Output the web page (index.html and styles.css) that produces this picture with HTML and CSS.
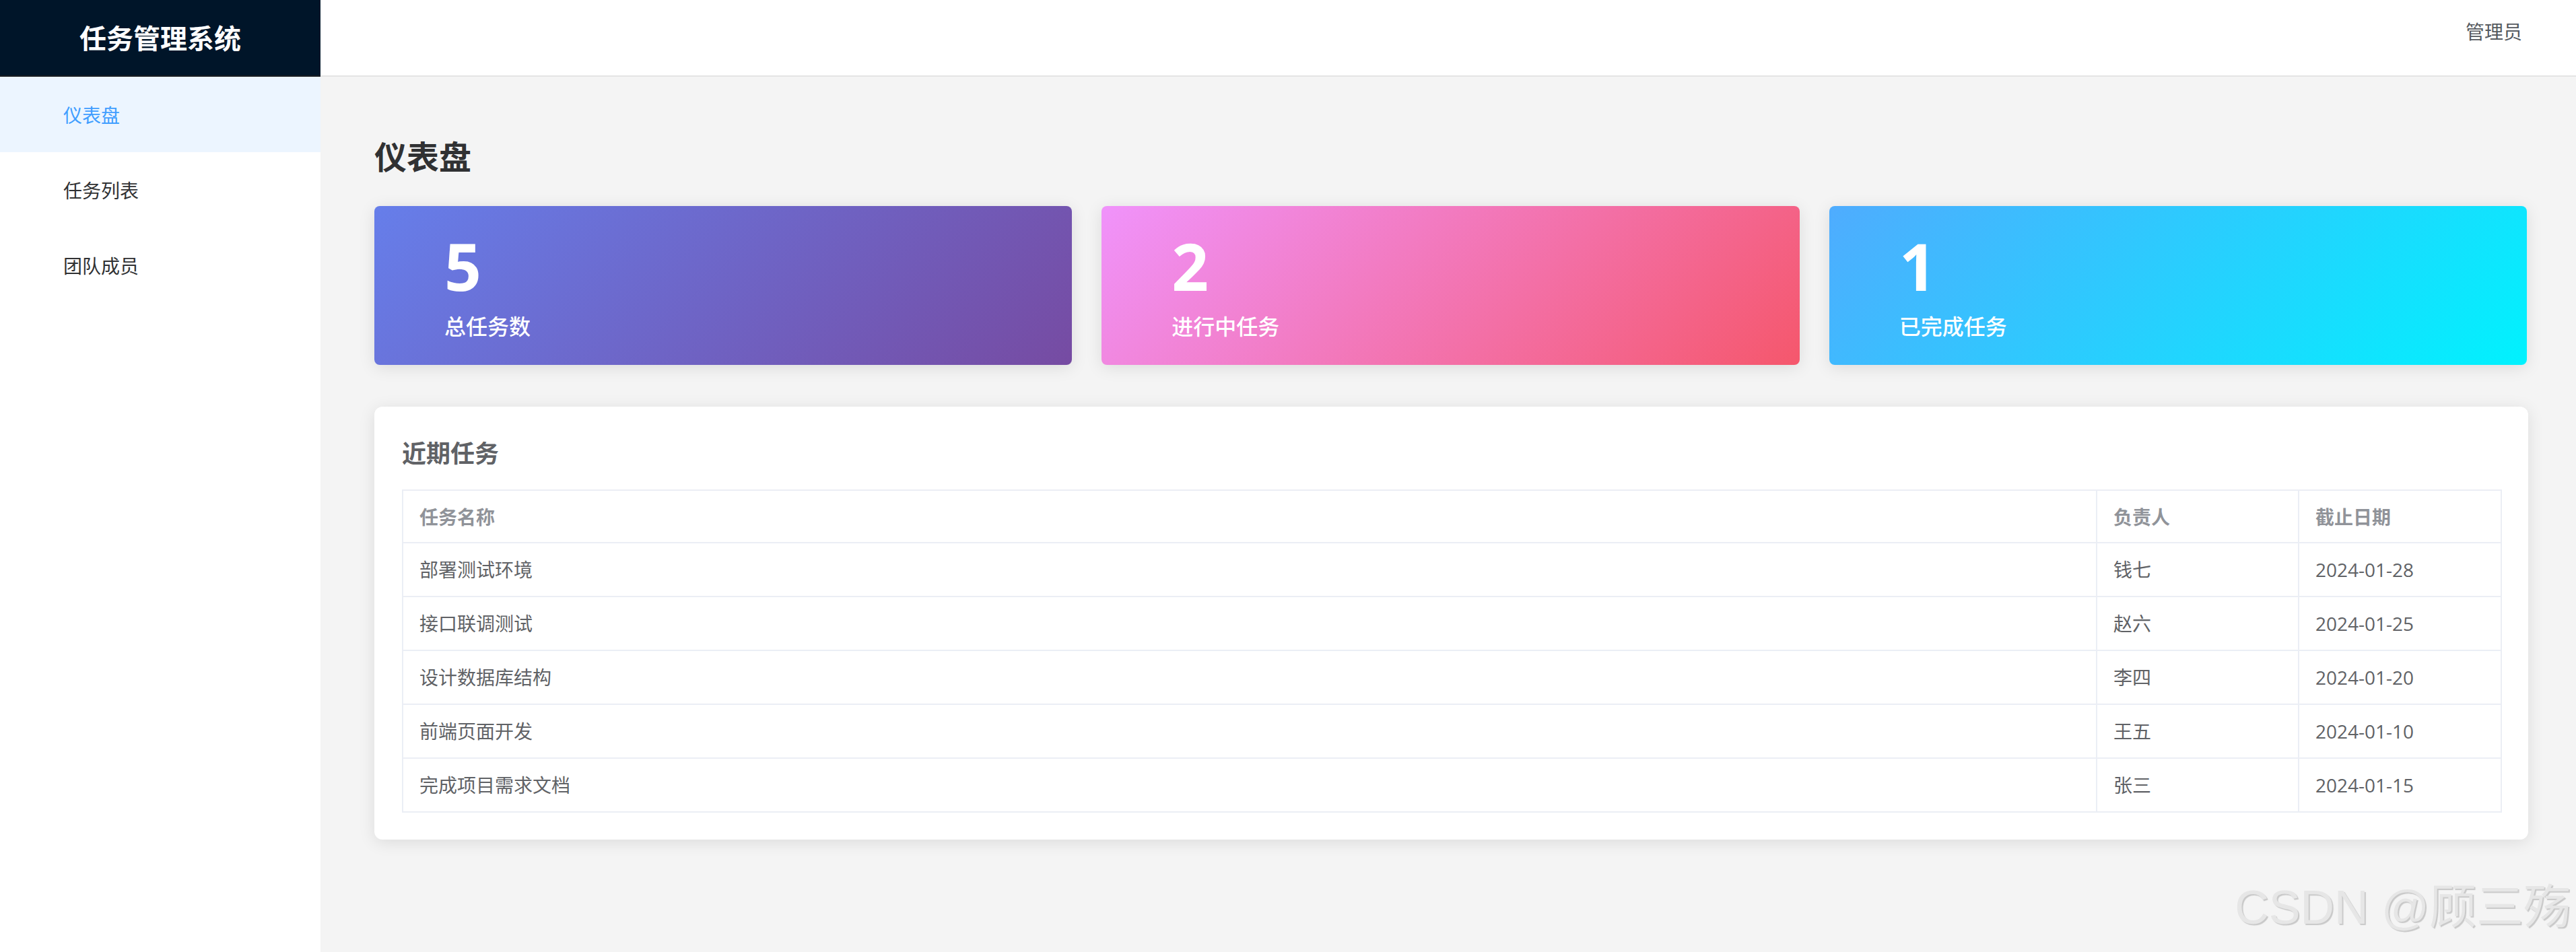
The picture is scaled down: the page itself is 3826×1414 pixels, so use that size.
FILE: index.html
```html
<!DOCTYPE html>
<html lang="zh-CN">
<head>
<meta charset="utf-8">
<title>任务管理系统</title>
<link rel="stylesheet" href="styles.css">
</head>
<body>
<div class="layout">
  <aside class="sidebar">
    <div class="logo">任务管理系统</div>
    <nav class="menu">
      <div class="menu-item active">仪表盘</div>
      <div class="menu-item">任务列表</div>
      <div class="menu-item">团队成员</div>
    </nav>
  </aside>
  <div class="right">
    <header class="topbar">
      <span class="user">管理员</span>
    </header>
    <main class="main">
      <h2 class="page-title">仪表盘</h2>
      <div class="stats">
        <div class="stat stat-total">
          <div class="stat-num">5</div>
          <div class="stat-label">总任务数</div>
        </div>
        <div class="stat stat-doing">
          <div class="stat-num">2</div>
          <div class="stat-label">进行中任务</div>
        </div>
        <div class="stat stat-done">
          <div class="stat-num">1</div>
          <div class="stat-label">已完成任务</div>
        </div>
      </div>
      <section class="panel">
        <h3 class="panel-title">近期任务</h3>
        <table class="tasks">
          <thead>
            <tr><th class="col-name">任务名称</th><th class="col-owner">负责人</th><th class="col-date">截止日期</th></tr>
          </thead>
          <tbody>
            <tr><td>部署测试环境</td><td>钱七</td><td>2024-01-28</td></tr>
            <tr><td>接口联调测试</td><td>赵六</td><td>2024-01-25</td></tr>
            <tr><td>设计数据库结构</td><td>李四</td><td>2024-01-20</td></tr>
            <tr><td>前端页面开发</td><td>王五</td><td>2024-01-10</td></tr>
            <tr><td>完成项目需求文档</td><td>张三</td><td>2024-01-15</td></tr>
          </tbody>
        </table>
      </section>
    </main>
  </div>
</div>
<div class="watermark">CSDN @顾三殇</div>
</body>
</html>
```

FILE: styles.css
```css
* { box-sizing: border-box; }
html, body {
  margin: 0;
  padding: 0;
}
body {
  font-family: "Open Sans", "Noto Sans CJK SC", sans-serif;
  background: #f4f4f4;
  color: #303133;
  width: 3826px;
  height: 1414px;
  overflow: hidden;
  position: relative;
}
.layout {
  display: flex;
  min-height: 1414px;
}
.sidebar {
  width: 476px;
  flex: none;
  background: #ffffff;
  min-height: 1414px;
}
.logo {
  height: 114px;
  background: #001529;
  border-bottom: 2px solid #1b1e22;
  color: #ffffff;
  font-family: "Noto Sans CJK SC", sans-serif;
  font-size: 40px;
  font-weight: 700;
  display: flex;
  align-items: center;
  justify-content: center;
  padding-bottom: 2px;
}
.menu-item {
  height: 112px;
  display: flex;
  align-items: center;
  padding-left: 94px;
  font-family: "Noto Sans CJK SC", sans-serif;
  font-size: 28px;
  color: #303133;
}
.menu-item.active {
  background: #ecf5ff;
  color: #409eff;
}
.right {
  flex: 1;
  display: flex;
  flex-direction: column;
  min-width: 0;
}
.topbar {
  height: 114px;
  background: #ffffff;
  border-bottom: 2px solid #e4e4e4;
  display: flex;
  justify-content: flex-end;
  align-items: flex-start;
  padding: 25px 80px 0 0;
}
.user {
  font-family: "Noto Sans CJK SC", sans-serif;
  font-size: 28px;
  line-height: 42px;
  color: #555a60;
}
.main {
  padding: 40px 71px 40px 80px;
}
.page-title {
  margin: 40px 0 40px 0;
  font-family: "Noto Sans CJK SC", sans-serif;
  font-size: 48px;
  line-height: 72px;
  font-weight: 700;
  color: #303133;
}
.stats {
  display: grid;
  grid-template-columns: 1fr 1fr 1fr;
  gap: 44px;
  padding-right: 2px;
}
.stat {
  height: 236px;
  border-radius: 8px;
  padding: 31px 40px 0 104px;
  color: #ffffff;
  box-shadow: 0 4px 24px rgba(0, 0, 0, 0.1);
}
.stat-total { background: linear-gradient(135deg, #667eea 0%, #764ba2 100%); }
.stat-doing { background: linear-gradient(135deg, #f093fb 0%, #f5576c 100%); }
.stat-done { background: linear-gradient(135deg, #4facfe 0%, #00f2fe 100%); }
.stat-num {
  font-family: "Open Sans", sans-serif;
  font-size: 96px;
  font-weight: 700;
  line-height: 115px;
}
.stat-label {
  margin-top: 7px;
  font-family: "Noto Sans CJK SC", sans-serif;
  font-size: 32px;
  line-height: 48px;
  font-weight: 500;
}
.panel {
  margin-top: 62px;
  background: #ffffff;
  border-radius: 12px;
  padding: 40px 39px 40px 41px;
  box-shadow: 0 4px 24px rgba(0, 0, 0, 0.1);
}
.panel-title {
  margin: 0 0 29px 0;
  font-family: "Noto Sans CJK SC", sans-serif;
  font-size: 36px;
  line-height: 54px;
  font-weight: 700;
  color: #606266;
}
.tasks {
  width: 100%;
  border-collapse: collapse;
  font-size: 28px;
  table-layout: fixed;
}
.tasks th, .tasks td {
  border: 2px solid #ebeef5;
  padding: 18px 24px;
  line-height: 42px;
  text-align: left;
}
.tasks th {
  color: #909399;
  font-weight: 700;
  font-family: "Noto Sans CJK SC", sans-serif;
  padding-top: 17px;
  padding-bottom: 17px;
}
.tasks td {
  color: #606266;
}
.col-owner { width: 300px; }
.col-date { width: 301px; }
.watermark {
  position: absolute;
  right: 8px;
  bottom: 26px;
  font-family: "Liberation Sans", "Noto Sans CJK SC", sans-serif;
  font-size: 70px;
  line-height: 80px;
  color: #e6e6e6;
  text-shadow: 2px 2px 1px rgba(0, 0, 0, 0.18);
  white-space: nowrap;
}
```
